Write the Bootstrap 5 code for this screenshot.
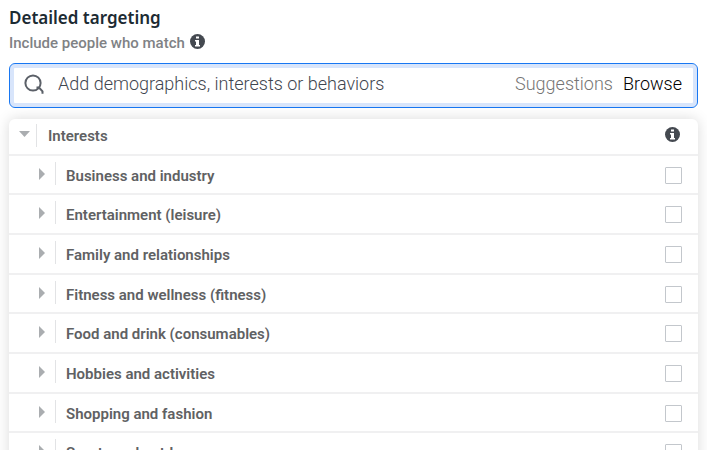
<!DOCTYPE html>
<html lang="en">
<head>
<meta charset="utf-8">
<meta name="viewport" content="width=device-width, initial-scale=1">
<title>Detailed targeting</title>
<link href="https://cdn.jsdelivr.net/npm/bootstrap@5.3.0/dist/css/bootstrap.min.css" rel="stylesheet">
<style>
body { font-family: Roboto, sans-serif; font-size: 15px; line-height: 20px; color: #606163; }
.panel { padding: 6px 9px 0; }
.panel-title { font: 600 17px/24px "Noto Sans", "Open Sans", sans-serif; color: #1c2b33; }
.sub { font-weight: 500; color: #808285; gap: 5px; margin-top: 3px; }
.info { color: #444950; line-height: 0; }
.sub .info { margin-top: 1px; }
.search { height: 45px; margin-top: 10px; padding: 0 15px 3px 14px; border: 1px solid #1877f2; border-radius: 6px; box-shadow: inset 0 0 0 4px #d8e5fb; font-size: 18px; }
.search input { font-size: 18px; font-weight: 300; color: #606770; margin-left: 14px; }
.search input::placeholder { color: #3f4650; opacity: 1; }
.modes { gap: 10px; }
.search button { font-weight: 300; color: #757575; line-height: 24px; }
.search button.current { color: #000; }
.tree { margin-top: 11px; border-radius: 6px 6px 0 0; background: #fff; box-shadow: 0 0 14px rgba(0, 0, 0, .15); font-weight: 600; }
.tree-head { height: 37px; border-bottom: 2px solid #f0f0f1; padding: 0 18px 2px 10px; }
.tree-head .twisty, .tree-head .info { margin-bottom: 3px; }
.tree-list { display: grid; grid-auto-rows: 39px 40px 40px; }
.tree-item { border-bottom: 2px solid #f0f0f1; padding: 0 16px 0 30px; }
.split { width: 1px; height: 23px; background: #e2e3e5; }
.tree-head .split { margin: 0 11px 0 6px; }
.tree-item .split { margin: 0 10px 3px; }
.twisty { line-height: 0; color: #aaadb0; }
.tree-item .twisty { margin-bottom: 2px; }
.tree-item label { padding-top: 2px; }
.tree-item .form-check-input { width: 17px; height: 17px; border: 1px solid #c3c7cc; border-radius: 1px; margin: 1px 0 0; }
</style>
<script src="https://cdn.jsdelivr.net/npm/bootstrap@5.3.0/dist/js/bootstrap.bundle.min.js"></script>
</head>
<body class="overflow-hidden">
<svg class="d-none">
  <symbol id="info" viewBox="0 0 15 15"><circle cx="7.500" cy="7.500" r="7.500" fill="currentColor"/><path fill="#fff" d="M6 2.500h3v2H6zM5 6h4v5h1v1.500H5V11h1V7.500H5z"/></symbol>
  <symbol id="right" viewBox="0 0 6 12"><path fill="currentColor" d="M0 0l6 6-6 6z"/></symbol>
</svg>
<main class="panel">
  <h1 class="panel-title mb-0">Detailed targeting</h1>
  <div class="sub d-flex align-items-start">
    <label for="q">Include people who match</label>
    <button class="btn p-0 border-0 info" aria-label="About matching"><svg width="15" height="15"><use href="#info"/></svg></button>
  </div>
  <div class="search d-flex align-items-center">
    <svg width="20" height="21" viewBox="0 0 20 21" fill="none" stroke="#5b6068" stroke-width="2"><circle cx="9" cy="9" r="7.600"/><path d="M12.500 13.500h2.500l3.500 3.800v2.500" stroke-width="2"/></svg>
    <input id="q" type="text" class="border-0 p-0 bg-transparent flex-grow-1" placeholder="Add demographics, interests or behaviors">
    <div class="modes d-flex">
      <button class="border-0 p-0 bg-transparent">Suggestions</button>
      <button class="border-0 p-0 bg-transparent current">Browse</button>
    </div>
  </div>
  <section class="tree">
    <div class="tree-head d-flex align-items-center">
      <button class="btn p-0 border-0 twisty" aria-label="Collapse Interests"><svg width="11" height="6"><path fill="currentColor" d="M0 0h11L5.500 6z"/></svg></button>
      <span class="split"></span>
      <span class="flex-grow-1">Interests</span>
      <button class="btn p-0 border-0 info" aria-label="About interests"><svg width="15" height="15"><use href="#info"/></svg></button>
    </div>
    <div class="tree-list">
      <div class="tree-item d-flex align-items-center"><button class="btn p-0 border-0 twisty" aria-label="Expand"><svg width="6" height="12"><use href="#right"/></svg></button><span class="split"></span><label class="flex-grow-1" for="c1">Business and industry</label><input class="form-check-input" type="checkbox" id="c1"></div>
      <div class="tree-item d-flex align-items-center"><button class="btn p-0 border-0 twisty" aria-label="Expand"><svg width="6" height="12"><use href="#right"/></svg></button><span class="split"></span><label class="flex-grow-1" for="c2">Entertainment (leisure)</label><input class="form-check-input" type="checkbox" id="c2"></div>
      <div class="tree-item d-flex align-items-center"><button class="btn p-0 border-0 twisty" aria-label="Expand"><svg width="6" height="12"><use href="#right"/></svg></button><span class="split"></span><label class="flex-grow-1" for="c3">Family and relationships</label><input class="form-check-input" type="checkbox" id="c3"></div>
      <div class="tree-item d-flex align-items-center"><button class="btn p-0 border-0 twisty" aria-label="Expand"><svg width="6" height="12"><use href="#right"/></svg></button><span class="split"></span><label class="flex-grow-1" for="c4">Fitness and wellness (fitness)</label><input class="form-check-input" type="checkbox" id="c4"></div>
      <div class="tree-item d-flex align-items-center"><button class="btn p-0 border-0 twisty" aria-label="Expand"><svg width="6" height="12"><use href="#right"/></svg></button><span class="split"></span><label class="flex-grow-1" for="c5">Food and drink (consumables)</label><input class="form-check-input" type="checkbox" id="c5"></div>
      <div class="tree-item d-flex align-items-center"><button class="btn p-0 border-0 twisty" aria-label="Expand"><svg width="6" height="12"><use href="#right"/></svg></button><span class="split"></span><label class="flex-grow-1" for="c6">Hobbies and activities</label><input class="form-check-input" type="checkbox" id="c6"></div>
      <div class="tree-item d-flex align-items-center"><button class="btn p-0 border-0 twisty" aria-label="Expand"><svg width="6" height="12"><use href="#right"/></svg></button><span class="split"></span><label class="flex-grow-1" for="c7">Shopping and fashion</label><input class="form-check-input" type="checkbox" id="c7"></div>
      <div class="tree-item d-flex align-items-center"><button class="btn p-0 border-0 twisty" aria-label="Expand"><svg width="6" height="12"><use href="#right"/></svg></button><span class="split"></span><label class="flex-grow-1" for="c8">Sports and outdoors</label><input class="form-check-input" type="checkbox" id="c8"></div>
    </div>
  </section>
</main>
</body>
</html>
